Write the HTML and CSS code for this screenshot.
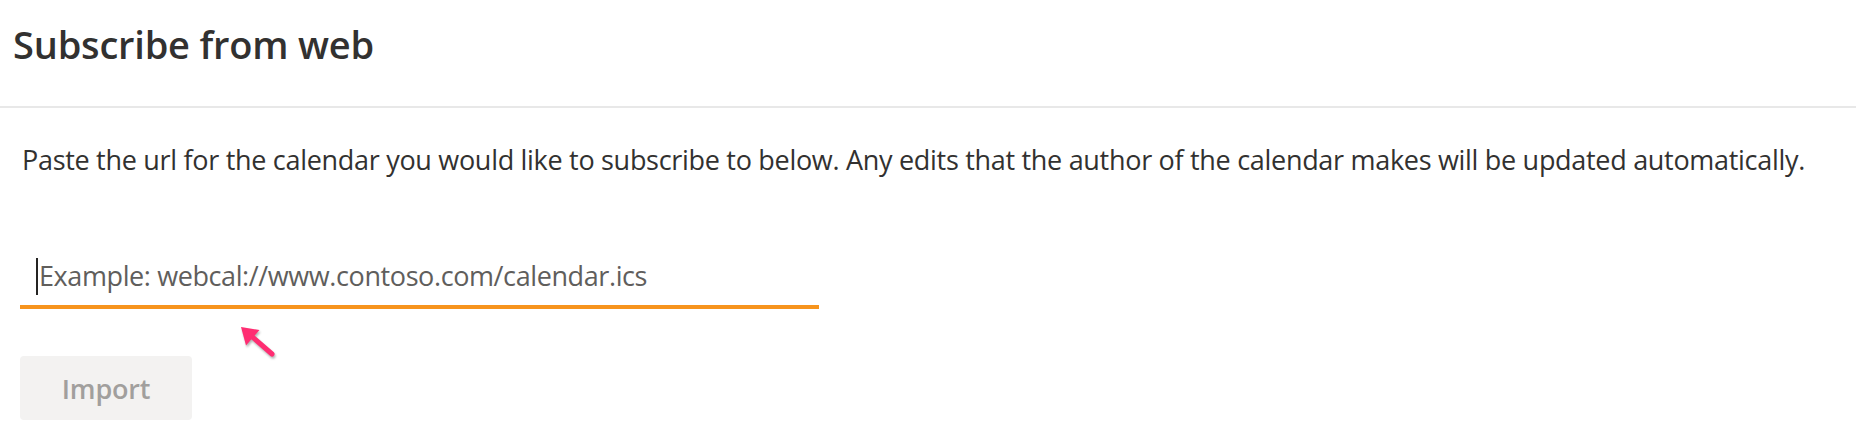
FILE: index.html
```html
<!DOCTYPE html>
<html lang="en">
<head>
    <meta charset="UTF-8">
    <title>Subscribe from web</title>
    <link rel="stylesheet" href="styles.css">
</head>
<body>
    <div class="panel-header">
        <h1 class="panel-title">Subscribe from web</h1>
    </div>

    <div class="panel-body">
        <p class="intro">Paste the url for the calendar you would like to subscribe to below. Any edits that the author of the calendar makes will be updated automatically.</p>

        <div class="url-field">
            <input class="url-input" type="text" placeholder="Example: webcal://www.contoso.com/calendar.ics">
            <span class="fake-caret"></span>
            <!-- hint arrow pointing at the field -->
            <svg class="hint-arrow" width="42" height="38" viewBox="0 0 42 38">
                <line x1="16.6" y1="15.2" x2="36" y2="32" stroke="#ff2d72" stroke-width="5" stroke-linecap="round"/>
                <polygon points="5,5 23.5,8 10,23.5" fill="#ff2d72"/>
            </svg>
        </div>

        <button class="import-btn" disabled>Import</button>
    </div>
</body>
</html>
```

FILE: styles.css
```css
body {
    margin: 0;
    font-family: "Open Sans", "Noto Sans", sans-serif;
    color: #323130;
    background-color: #fff;
}

.panel-header {
    height: 106px;
    padding: 0 13px;
    border-bottom: 2px solid #e8e8e8;
}

.panel-title {
    margin: 0;
    padding-top: 18px;
    font-size: 38px;
    font-weight: 600;
    letter-spacing: -0.2px;
    color: #323130;
}

.panel-body {
    padding: 0 20px;
}

.intro {
    margin: 33px 0 0 2px;
    font-size: 27px;
    letter-spacing: -0.3px;
    white-space: nowrap;
}

.url-field {
    position: relative;
    width: 799px;
    margin-top: 80px;
}

.url-input {
    display: block;
    width: 100%;
    height: 51px;
    box-sizing: border-box;
    padding: 0 0 12px 19px;
    border: none;
    border-bottom: 4px solid #f7941d;
    outline: none;
    font-family: inherit;
    font-size: 27px;
    letter-spacing: -0.4px;
    color: #323130;
    background: transparent;
}

.url-input::placeholder {
    color: #605e5c;
}

.fake-caret {
    position: absolute;
    left: 16px;
    top: 0;
    width: 2px;
    height: 37px;
    background-color: #252423;
}

.hint-arrow {
    position: absolute;
    left: 216px;
    top: 64px;
    filter: drop-shadow(1px 2px 1px rgba(0, 0, 0, 0.3));
}

.import-btn {
    display: block;
    width: 172px;
    height: 64px;
    margin-top: 47px;
    border: none;
    border-radius: 4px;
    background-color: #f3f2f1;
    color: #a19f9d;
    font-family: inherit;
    font-size: 27px;
    font-weight: 600;
    letter-spacing: -0.2px;
}
```
